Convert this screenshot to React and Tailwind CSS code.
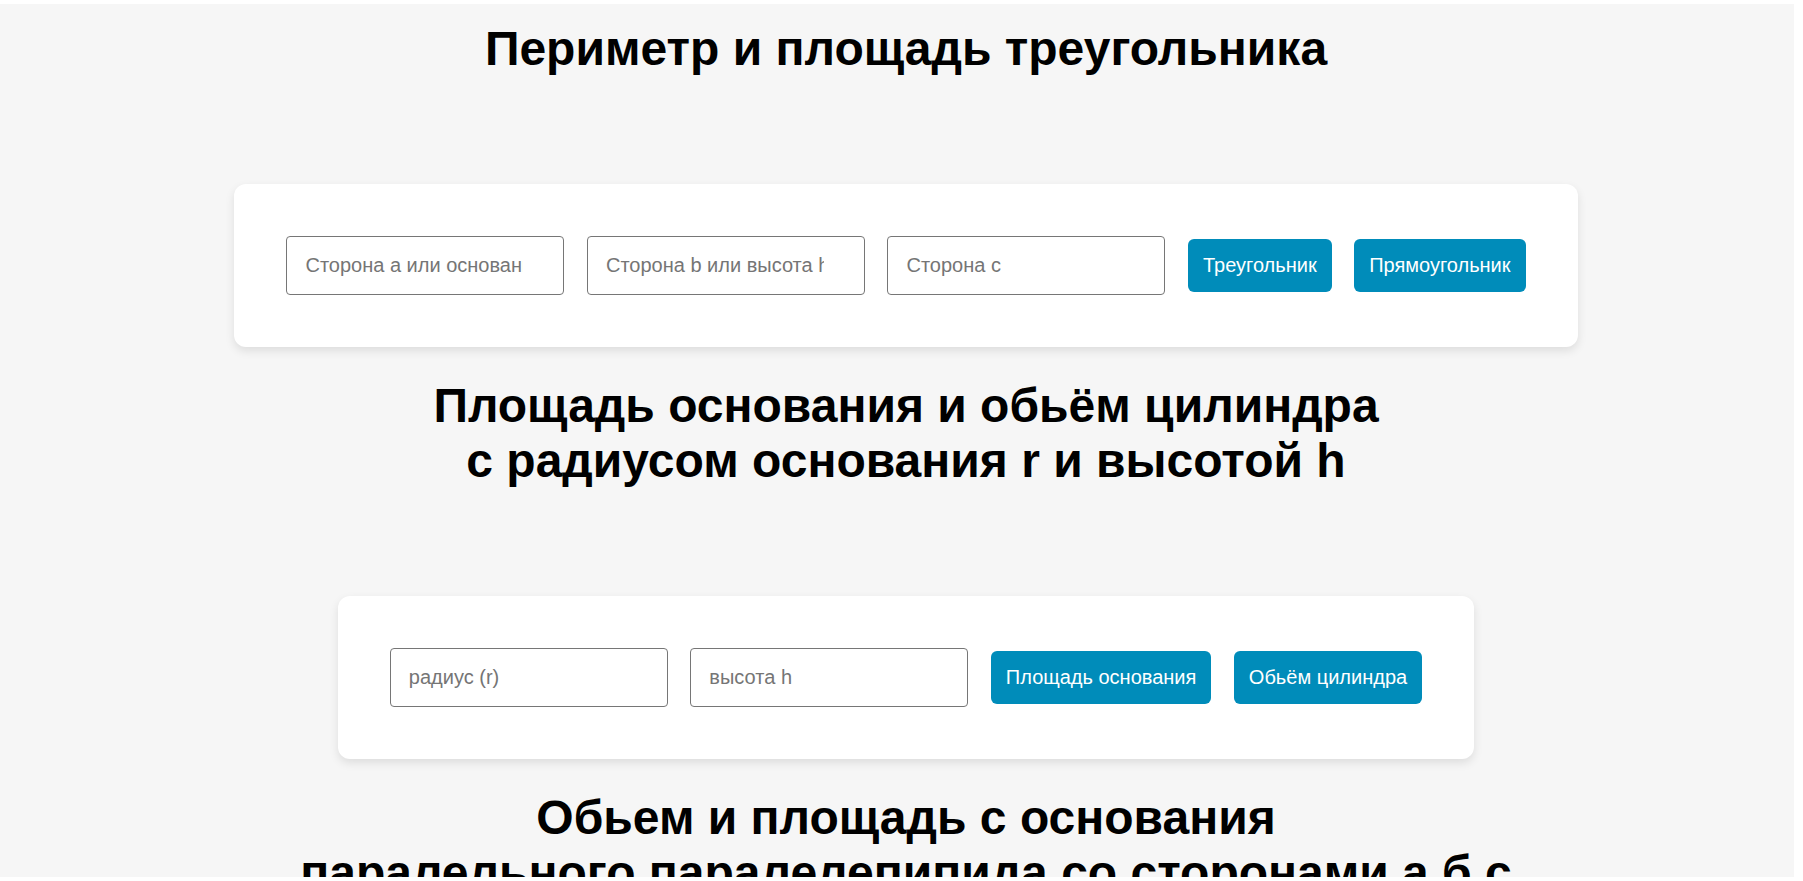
import React from "react";

function Field({ placeholder }) {
  return (
    <input
      type="text"
      placeholder={placeholder}
      className="h-[59px] w-[278px] shrink-0 rounded-[4px] border border-[#767676] bg-white pr-[40px] pl-[18px] text-[20px] text-black outline-none placeholder:text-[#757575]"
    />
  );
}

function Action({ children }) {
  return (
    <button
      type="button"
      className="shrink-0 rounded-[6px] bg-[#008cba] px-[15px] py-[15px] text-[20px] leading-[23px] text-white"
    >
      {children}
    </button>
  );
}

function Card({ children }) {
  return (
    <div className="mt-[108px] flex items-center gap-[22.5px] rounded-[12px] bg-white p-[52px] shadow-[0_4px_10px_rgba(0,0,0,0.1)]">
      {children}
    </div>
  );
}

function Title({ children, className = "" }) {
  return (
    <h1 className={`text-center text-[48px] font-bold leading-[55px] text-black ${className}`}>{children}</h1>
  );
}

export default function App() {
  return (
    <div className="h-[881px] overflow-hidden bg-white pt-[4px] pr-[9px] pb-[4px]">
      <div className="h-full overflow-hidden bg-[#f6f6f6] pl-[18px] font-['Liberation_Sans',Arial,sans-serif]">
        <div className="flex flex-col items-center">
          <Title className="mt-[17px]">Периметр и площадь треугольника</Title>

          <Card>
            <Field placeholder="Сторона а или основание" />
            <Field placeholder="Сторона b или высота h" />
            <Field placeholder="Сторона с" />
            <Action>Треугольник</Action>
            <Action>Прямоугольник</Action>
          </Card>

          <Title className="mt-[31px]">
            Площадь основания и обьём цилиндра
            <br />
            с радиусом основания r и высотой h
          </Title>

          <Card>
            <Field placeholder="радиус (r)" />
            <Field placeholder="высота h" />
            <Action>Площадь основания</Action>
            <Action>Обьём цилиндра</Action>
          </Card>

          <Title className="mt-[31px]">
            Обьем и площадь с основания
            <br />
            паралельного паралелепипида со сторонами а б с
          </Title>
        </div>
      </div>
    </div>
  );
}
